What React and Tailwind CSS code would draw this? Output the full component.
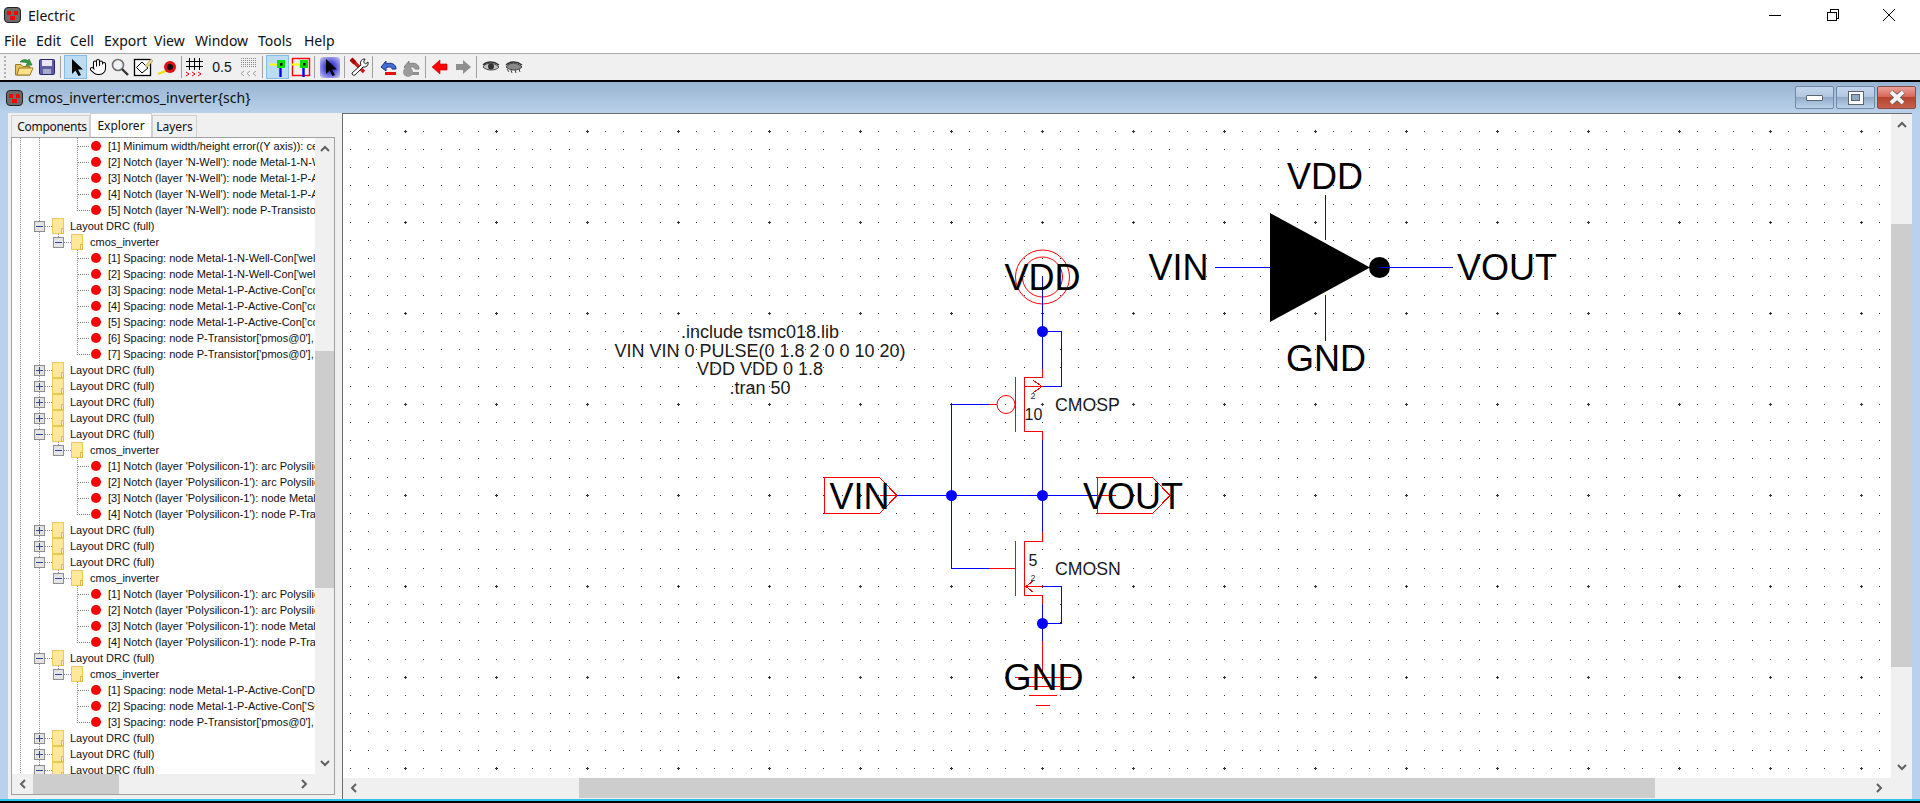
import React from 'react';
import { Hand } from 'lucide-react';

const GUIDE = '#8a8a8a';

const notch = [
  "[1] Minimum width/height error((Y axis)): cell",
  "[2] Notch (layer 'N-Well'): node Metal-1-N-Well",
  "[3] Notch (layer 'N-Well'): node Metal-1-P-Active",
  "[4] Notch (layer 'N-Well'): node Metal-1-P-Active",
  "[5] Notch (layer 'N-Well'): node P-Transistor['pmos",
];
const spacing = [
  "[1] Spacing: node Metal-1-N-Well-Con['well",
  "[2] Spacing: node Metal-1-N-Well-Con['well",
  "[3] Spacing: node Metal-1-P-Active-Con['contact",
  "[4] Spacing: node Metal-1-P-Active-Con['contact",
  "[5] Spacing: node Metal-1-P-Active-Con['contact",
  "[6] Spacing: node P-Transistor['pmos@0'],",
  "[7] Spacing: node P-Transistor['pmos@0'],",
];
const poly = [
  "[1] Notch (layer 'Polysilicon-1'): arc Polysilicon",
  "[2] Notch (layer 'Polysilicon-1'): arc Polysilicon",
  "[3] Notch (layer 'Polysilicon-1'): node Metal-1",
  "[4] Notch (layer 'Polysilicon-1'): node P-Transistor",
];
const last = [
  "[1] Spacing: node Metal-1-P-Active-Con['DRAIN",
  "[2] Spacing: node Metal-1-P-Active-Con['SOURCE",
  "[3] Spacing: node P-Transistor['pmos@0'],",
];

const leaves = (list) => list.map((text, i) => ({ kind: 'leaf', text, end: i === list.length - 1 }));
const closed = () => ({ kind: 'top', open: false });
const opened = () => ({ kind: 'top', open: true });
const cell = { kind: 'cell' };

const rows = [
  ...leaves(notch),
  opened(), cell, ...leaves(spacing),
  closed(), closed(), closed(), closed(),
  opened(), cell, ...leaves(poly),
  closed(), closed(),
  opened(), cell, ...leaves(poly),
  opened(), cell, ...leaves(last),
  closed(), closed(),
  opened(),
];

const Dotted = ({ d }) => (
  <path d={d} stroke={GUIDE} strokeWidth="1" strokeDasharray="1 1" fill="none" shapeRendering="crispEdges" />
);

const Expander = ({ x, open }) => (
  <g shapeRendering="crispEdges">
    <rect x={x + 0.5} y="3.5" width="10" height="10" fill="#e4e4e4" stroke="#8e8e8e" />
    <path d={`M${x + 2} 8.5H${x + 9}`} stroke="#33479a" />
    {!open && <path d={`M${x + 5.5} 5V12`} stroke="#33479a" />}
  </g>
);

const Folder = ({ x }) => (
  <g shapeRendering="crispEdges">
    <path d={`M${x + 0.5} 0.5H${x + 11.5}V15.5H${x + 0.5}Z`} fill="#ffe89c" stroke="#ecca58" />
    <rect x={x + 9.5} y="10.5" width="2" height="5" fill="#fff3c4" stroke="#e3bd45" />
  </g>
);

// gutter drawings use page x coordinates, the tree itself starts at x=12
const TreeRow = ({ row }) => {
  if (row.kind === 'leaf') {
    return (
      <div className="flex h-4 items-center">
        <svg width="96" height="16" viewBox="12 0 96 16" className="shrink-0">
          <Dotted d="M20.5 0V16M39.5 0V16" />
          <Dotted d={row.end ? 'M77.5 0V8.5H90' : 'M77.5 0V16M77.5 8.5H90'} />
          <circle cx="96" cy="8" r="5" fill="#ff0000" />
        </svg>
        <span>{row.text}</span>
      </div>
    );
  }
  if (row.kind === 'cell') {
    return (
      <div className="flex h-4 items-center">
        <svg width="78" height="16" viewBox="12 0 78 16" className="shrink-0">
          <Dotted d="M20.5 0V16M39.5 0V16M58.5 0V4M64 8.5H71" />
          <Expander x={53} open />
          <Folder x={71} />
        </svg>
        <span>cmos_inverter</span>
      </div>
    );
  }
  return (
    <div className="flex h-4 items-center">
      <svg width="58" height="16" viewBox="12 0 58 16" className="shrink-0">
        <Dotted d="M20.5 0V16M39.5 0V4M39.5 14V16M45 8.5H52" />
        <Expander x={34} open={row.open} />
        <Folder x={52} />
      </svg>
      <span>Layout DRC (full)</span>
    </div>
  );
};

const Chevron = ({ dir }) => {
  const paths = {
    up: 'M1 7L5 3L9 7',
    down: 'M1 3L5 7L9 3',
    left: 'M7 1L3 5L7 9',
    right: 'M3 1L7 5L3 9',
  };
  return (
    <svg width="10" height="10" viewBox="0 0 10 10" className="shrink-0">
      <path d={paths[dir]} fill="none" stroke="#606060" strokeWidth="2" />
    </svg>
  );
};

const Logo = () => (
  <svg width="17" height="16" viewBox="0 0 17 16" className="shrink-0">
    <rect x="0.5" y="0.5" width="16" height="15" rx="3.5" fill="#6b6b6b" stroke="#222" />
    <g fill="#ff0000" shapeRendering="crispEdges">
      <rect x="3" y="4" width="4" height="4" />
      <rect x="10" y="4" width="4" height="4" />
      <rect x="6" y="9" width="5" height="4" />
    </g>
  </svg>
);

const Sep = ({ className }) => <div className={`h-[22px] w-px bg-[#a0a0a0] ${className}`} />;

const Tool = ({ w = 'w-[23px]', active, children }) => (
  <div
    className={`${w} flex h-[24px] shrink-0 items-center justify-center ${
      active ? 'border border-[#86bde8] bg-[#bcdcf4]' : ''
    }`}
  >
    {children}
  </div>
);

const Icon = ({ children, w = 20, h = 20 }) => (
  <svg width={w} height={h} viewBox={`0 0 ${w} ${h}`}>
    {children}
  </svg>
);

const Pointer = () => <path d="M6 2V17L9.5 13.5L12.5 19L15 18L12 12.5H17Z" fill="#000" />;

const ArcToggle = ({ box }) => (
  <Icon>
    {box && <rect x="1.5" y="1.5" width="17" height="17" fill="none" stroke="#ff0000" strokeWidth="1.4" />}
    <path d="M1 7.5H11" stroke="#ffff00" strokeWidth="2" />
    <path d="M12.5 10V20" stroke="#0000ff" strokeWidth="2.4" />
    <rect x="9" y="3" width="8" height="8" fill="#00e000" />
    <rect x="12" y="6" width="2.5" height="2.5" fill="#000" />
  </Icon>
);

const GridIcon = () => (
  <Icon w={20} h={22}>
    <path d="M4.5 2V14M9.5 2V14M14.5 2V14M1 5.5H18M1 10.5H18" stroke="#000" strokeWidth="1.2" fill="none" shapeRendering="crispEdges" />
    <path d="M1 16L4 18L1 20M7 16L10 18L7 20M13 16L16 18L13 20" stroke="#ff0000" fill="none" />
  </Icon>
);

const GridOff = () => (
  <Icon w={20} h={22}>
    <path d="M2 2H18M2 4H18M2 6H18M2 8H18M2 10H18" stroke="#8a8a8a" strokeDasharray="1.2 0.8" shapeRendering="crispEdges" />
    <path d="M5 15L2 17.5L5 20M11 15L8 17.5L11 20M17 15L14 17.5L17 20" stroke="#a0a0a0" fill="none" />
  </Icon>
);

const Undo = ({ gray }) => (
  <Icon>
    <path
      d="M3 10L8 4V7C13 5 18 7 18 12H14C14 10 11 9 8 11V14Z"
      fill={gray ? '#9a9a9a' : '#3f6fd8'}
      stroke={gray ? '#7e7e7e' : '#1c2f8c'}
    />
    <rect x="7" y="15" width="11" height="3" fill={gray ? '#8f8f8f' : '#e01010'} />
    {gray && <circle cx="7" cy="15" r="5" fill="#9a9a9a" />}
  </Icon>
);

const Eye = ({ shut }) => (
  <Icon w={18} h={14}>
    <path d="M1 7C4 2 12 2 17 7C14 11 5 11 1 7Z" fill={shut ? '#8a8a8a' : '#c4c4c4'} stroke="#444" />
    {shut ? (
      <path d="M2 9L4 12M6 10L7 13M10 10L11 13M14 9L15 12" stroke="#444" />
    ) : (
      <circle cx="9" cy="6.5" r="3" fill="#333" />
    )}
    <path d="M1 5C5 1 12 1 17 5" stroke="#333" strokeWidth="1.4" fill="none" />
  </Icon>
);

const Toolbar = () => (
  <div className="flex h-[26px] shrink-0 items-center bg-[#f0f0f0]">
    <div className="ml-[4px] mr-[5px] h-[22px] w-[3px] border-l-2 border-dotted border-[#b0b0b0]" />
    <Tool>
      <Icon>
        <path d="M1.5 7.5H7L9 9.5H16V18H1.5Z" fill="#e6c25a" stroke="#9c7b22" />
        <path d="M3 18L5 11H19L16 18Z" fill="#fbe08a" stroke="#9c7b22" />
        <path d="M6 5C9 2 12 2 14 4L15 2L18 8L12 8.5L13.5 6C11 5 9 5 6 5Z" fill="#2f9e3a" stroke="#1c6a24" strokeWidth="0.6" />
      </Icon>
    </Tool>
    <Tool>
      <Icon>
        <rect x="2.5" y="2.5" width="15" height="15" rx="1" fill="#5d5da8" stroke="#27276e" />
        <rect x="5" y="3" width="10" height="6" fill="#e8e8f4" />
        <rect x="6" y="12" width="8" height="5" fill="#aaaacc" />
      </Icon>
    </Tool>
    <Sep className="ml-[2px] mr-[3px]" />
    <Tool active>
      <Icon>
        <Pointer />
      </Icon>
    </Tool>
    <Tool w="w-[22px]">
      <Hand size={18} strokeWidth={1.4} color="#000" fill="#fff" />
    </Tool>
    <Tool w="w-[22px]">
      <Icon>
        <circle cx="8" cy="8" r="5.5" fill="#eef2f6" stroke="#6e6e6e" strokeWidth="1.6" />
        <path d="M12 12L18 18" stroke="#333" strokeWidth="2.4" />
      </Icon>
    </Tool>
    <Tool w="w-[24px]">
      <Icon>
        <rect x="1.5" y="2.5" width="16" height="16" fill="#fff" stroke="#000" strokeWidth="1.3" />
        <path d="M9 5L15 11L9 16L3.5 10.5Z" fill="#fff" stroke="#000" />
        <path d="M12 9L18 2L20 4L14 10.5Z" fill="#f0d488" stroke="#a08a50" strokeWidth="0.6" />
      </Icon>
    </Tool>
    <Tool w="w-[24px]">
      <Icon>
        <path d="M1 17L11 13" stroke="#f4e000" strokeWidth="2.4" />
        <circle cx="13" cy="10" r="6" fill="#e01010" />
        <circle cx="13" cy="10" r="3" fill="#111" />
      </Icon>
    </Tool>
    <Sep className="ml-[2px] mr-[2px]" />
    <Tool w="w-[22px]">
      <GridIcon />
    </Tool>
    <div className="flex w-[32px] shrink-0 justify-center font-['Liberation_Sans'] text-[14px] text-[#101018]">0.5</div>
    <Tool w="w-[22px]">
      <GridOff />
    </Tool>
    <Sep className="ml-[2px] mr-[3px]" />
    <Tool active>
      <ArcToggle />
    </Tool>
    <Tool>
      <ArcToggle box />
    </Tool>
    <Sep className="ml-[2px] mr-[3px]" />
    <Tool>
      <div className="flex h-[21px] w-[20px] items-center justify-center rounded-[3px] bg-[radial-gradient(circle,#3d3dd8_30%,#c8c8f0_95%)]">
        <Icon>
          <Pointer />
        </Icon>
      </div>
    </Tool>
    <Sep className="ml-[3px] mr-[2px]" />
    <Tool>
      <Icon>
        <path d="M3 3L15 15" stroke="#d01818" strokeWidth="3.4" />
        <path d="M16 2A4 4 0 0 0 12 8L3 16A2 2 0 0 0 6 18L14 10A4 4 0 0 0 19 5L16.5 7L14.5 5Z" fill="#fff" stroke="#222" />
        <path d="M2 2L6 6" stroke="#a00" strokeWidth="4" />
      </Icon>
    </Tool>
    <Sep className="ml-[2px] mr-[3px]" />
    <Tool>
      <Undo />
    </Tool>
    <Tool>
      <Undo gray />
    </Tool>
    <Sep className="ml-[3px] mr-[2px]" />
    <Tool>
      <Icon>
        <path d="M2 10L10 3V7H17V13H10V17Z" fill="#ff0000" stroke="#c00000" strokeWidth="0.6" />
      </Icon>
    </Tool>
    <Tool>
      <Icon>
        <path d="M18 10L10 3V7H3V13H10V17Z" fill="#8f8f8f" />
      </Icon>
    </Tool>
    <Sep className="ml-[2px] mr-[2px]" />
    <Tool>
      <Eye />
    </Tool>
    <Tool>
      <Eye shut />
    </Tool>
  </div>
);

const gridPath = () => {
  let d = '';
  for (let i = -29; i < 58; i++) {
    for (let j = -11; j < 26; j++) {
      const x = Math.floor(860.3 + i * 18.2);
      const y = Math.floor(313.3 + j * 18.2);
      d += `M${x} ${y}h1v1h-1z`;
      if (i % 5 === 0 && j % 5 === 0) {
        d += `M${x - 1} ${y}h3v1h-3zM${x} ${y - 1}h1v3h-1z`;
      }
    }
  }
  return d;
};

const Label = ({ x, y, size = 36, anchor = 'middle', fill = '#000', children }) => (
  <text x={x} y={y} fontSize={size} textAnchor={anchor} fill={fill} className="font-['Liberation_Sans']">
    {children}
  </text>
);

// viewBox is in page pixels, so coordinates read straight off the screenshot
const Schematic = () => (
  <svg width="1548" height="664" viewBox="343 114 1548 664" className="block bg-white">
    <path d={gridPath()} fill="#333" shapeRendering="crispEdges" />

    <g fontSize="18" textAnchor="middle" fill="#1a1a1a" className="font-['Liberation_Sans']">
      <text x="760" y="338">.include tsmc018.lib</text>
      <text x="760" y="356.5">VIN VIN 0 PULSE(0 1.8 2 0 0 10 20)</text>
      <text x="760" y="375">VDD VDD 0 1.8</text>
      <text x="760" y="393.5">.tran 50</text>
    </g>

    <g fill="none" stroke="#ff0000" strokeWidth="1">
      <circle cx="1042.5" cy="277" r="27" />
      <circle cx="1042.5" cy="277" r="20" />
      <circle cx="1006" cy="404.5" r="9" />
    </g>
    <g fill="none" stroke="#ff0000" strokeWidth="1" shapeRendering="crispEdges">
      <path d="M1042.5 368.5V377.5H1024.5V431.5H1042.5V440" />
      <path d="M1015.5 377V432M989 404.5H997" />
      <path d="M1024.5 386.5H1042.5M1033.5 380.5L1042 386.5L1033.5 392.5" />
      <path d="M1042.5 532V541.5H1024.5V595.5H1042.5V604" />
      <path d="M1015.5 541V596M989 568.5H1015" />
      <path d="M1024.5 586.5H1042.5M1033.5 580.5L1026 586.5L1033.5 592.5" />
      <path d="M1042.5 641V677.5M1015 677.5H1071M1025 686.5H1060M1029 695.5H1057M1036 705.5H1050" />
      <path d="M824.5 477.5H879.5L897 495.5L879.5 513.5H824.5ZM880 495.5H897" />
      <path d="M1097.5 477.5H1152.5L1170 495.5L1152.5 513.5H1097.5ZM1097 495.5H1115" />
    </g>
    <g fill="none" stroke="#0000ff" strokeWidth="1" shapeRendering="crispEdges">
      <path d="M1042.5 277V368.5M1042.5 331.5H1061.5V386.5H1042.5" />
      <path d="M989 404.5H951.5V568.5H989" />
      <path d="M897 495.5H1097M1042.5 440V532M1042.5 604V641" />
      <path d="M1042.5 586.5H1061.5V623.5H1042.5" />
      <path d="M1215 267.5H1270M1379 267.5H1453M1325.5 195V240M1325.5 295V341" />
    </g>
    <g fill="#0000ff">
      <circle cx="1042.5" cy="331.5" r="5.5" />
      <circle cx="951.5" cy="495.5" r="5.5" />
      <circle cx="1042.5" cy="495.5" r="5.5" />
      <circle cx="1042.5" cy="623.5" r="5.5" />
    </g>

    <path d="M1270 213L1370 267.5L1270 322Z" fill="#000" />
    <circle cx="1379.5" cy="267.5" r="10.5" fill="#000" />
    <path d="M1379 267.5H1390" stroke="#0000ff" shapeRendering="crispEdges" />

    <Label x={1042.5} y={290}>VDD</Label>
    <Label x={1043.5} y={690}>GND</Label>
    <Label x={859.5} y={509}>VIN</Label>
    <Label x={1133} y={509}>VOUT</Label>
    <Label x={1325} y={189}>VDD</Label>
    <Label x={1326} y={371}>GND</Label>
    <Label x={1178.5} y={280}>VIN</Label>
    <Label x={1507} y={280}>VOUT</Label>

    <Label x={1055} y={411} size={17.7} anchor="start" fill="#1a1a1a">CMOSP</Label>
    <Label x={1055} y={575} size={17.7} anchor="start" fill="#1a1a1a">CMOSN</Label>
    <Label x={1033.5} y={420} size={16} fill="#1a1a1a">10</Label>
    <Label x={1033} y={566} size={16} fill="#1a1a1a">5</Label>
    <Label x={1033} y={399} size={9} fill="#333">2</Label>
    <Label x={1033} y={581} size={9} fill="#333">2</Label>
  </svg>
);

const VScroll = ({ w, top, thumb }) => (
  <div className={`${w} relative flex shrink-0 flex-col items-center justify-between bg-[#f0f0f0] py-[6px]`}>
    <Chevron dir="up" />
    <div className={`absolute inset-x-0 ${top} ${thumb} bg-[#cdcdcd]`} />
    <Chevron dir="down" />
  </div>
);

const HScroll = ({ h, left, thumb, padding }) => (
  <div className={`${h} ${padding} relative flex shrink-0 items-center justify-between bg-[#f0f0f0]`}>
    <Chevron dir="left" />
    <div className={`absolute inset-y-0 ${left} ${thumb} bg-[#cdcdcd]`} />
    <Chevron dir="right" />
  </div>
);

const WinButton = ({ close, children }) => (
  <div
    className={`flex h-[23px] w-[39px] items-center justify-center rounded-[2px] border ${
      close
        ? 'border-[#8c4a44] bg-[linear-gradient(#e9a198_0%,#d9695a_45%,#b8432c_50%,#c4604c_100%)]'
        : 'border-[#7189a8] bg-[linear-gradient(#c3d6ec_0%,#b2c8e2_45%,#92abc8_50%,#bcd2ea_100%)]'
    }`}
  >
    {children}
  </div>
);

const InnerWindow = () => (
  <div className="flex min-h-0 flex-1 flex-col border-t-2 border-black bg-[#b9d1ea]">
    <div className="flex h-[31px] shrink-0 items-center justify-between bg-[linear-gradient(#99b4d1,#b9d1ea)] pl-[6px] pr-[4px]">
      <div className="flex items-center gap-[5px] font-['Noto_Sans'] text-[14px] text-[#101010]">
        <Logo />
        <span>cmos_inverter:cmos_inverter{'{sch}'}</span>
      </div>
      <div className="flex gap-[2px]">
        <WinButton>
          <div className="h-[6px] w-[17px] rounded-[1px] border border-[#5c6470] bg-white" />
        </WinButton>
        <WinButton>
          <div className="flex h-[14px] w-[16px] items-center justify-center border border-[#5c6470] bg-white">
            <div className="h-[7px] w-[9px] border border-[#5c6470] bg-[#8fa9c8]" />
          </div>
        </WinButton>
        <WinButton close>
          <svg width="18" height="15" viewBox="0 0 18 15">
            <path d="M3 2L15 13M15 2L3 13" stroke="#5c5c5c" strokeWidth="5.4" />
            <path d="M3 2L15 13M15 2L3 13" stroke="#f4f4f4" strokeWidth="3.8" />
          </svg>
        </WinButton>
      </div>
    </div>

    <div className="flex min-h-0 flex-1 pl-[8px] pr-[8px]">
      {/* Left panel */}
      <div className="flex w-[334px] shrink-0 flex-col bg-[#f0f0f0] pb-[4px] pl-[3px] pr-[7px]">
        <div className="flex h-[24px] shrink-0 items-end font-['Noto_Sans'] text-[12px] text-[#101010]">
          <div className="flex h-[22px] w-[79px] items-center justify-center border border-b-0 border-[#d0d0d0] pl-[3px] tracking-[-0.3px]">Components</div>
          <div className="flex h-[24px] w-[62px] items-center justify-center border border-b-0 border-[#d0d0d0] bg-white">Explorer</div>
          <div className="flex h-[22px] w-[45px] items-center justify-center border border-b-0 border-[#d0d0d0]">Layers</div>
        </div>
        <div className="flex min-h-0 flex-1 flex-col border border-[#a0a0a0]">
          <div className="flex min-h-0 flex-1">
            <div className="min-w-0 flex-1 overflow-hidden whitespace-nowrap bg-white font-['Liberation_Sans'] text-[11px] text-[#101010]">
              {rows.map((row, i) => (
                <TreeRow key={i} row={row} />
              ))}
            </div>
            <VScroll w="w-[19px]" top="top-[213px]" thumb="h-[237px]" />
          </div>
          <HScroll h="h-[20px]" left="left-[21px]" thumb="w-[86px]" padding="pl-[6px] pr-[25px]" />
        </div>
      </div>

      {/* Canvas */}
      <div className="flex min-w-0 flex-1 flex-col border-l border-t border-[#6d6d6d] bg-[#f0f0f0] pb-[1px]">
        <div className="flex min-h-0 flex-1">
          <Schematic />
          <VScroll w="w-[21px]" top="top-[110px]" thumb="h-[443px]" />
        </div>
        <HScroll h="h-[20px]" left="left-[236px]" thumb="w-[1076px]" padding="pl-[6px] pr-[28px]" />
      </div>
    </div>

    <div className="h-[2px] shrink-0 bg-[#2bc4e8]" />
    <div className="h-[2px] shrink-0 bg-black" />
  </div>
);

export default function App() {
  const menus = [
    ['File', 'w-[32px]'],
    ['Edit', 'w-[34px]'],
    ['Cell', 'w-[34px]'],
    ['Export', 'w-[50px]'],
    ['View', 'w-[41px]'],
    ['Window', 'w-[63px]'],
    ['Tools', 'w-[46px]'],
    ['Help', 'w-[40px]'],
  ];

  return (
    <div className="flex h-[803px] w-[1920px] flex-col overflow-hidden bg-white">
      {/* Title bar */}
      <div className="flex h-[30px] shrink-0 items-center pl-[4px] font-['Noto_Sans'] text-[14px] text-[#101010]">
        <Logo />
        <span className="ml-[7px]">Electric</span>
        <div className="ml-auto flex items-center">
          <div className="flex w-[58px] justify-center">
            <div className="h-px w-[12px] bg-black" />
          </div>
          <div className="flex w-[58px] justify-center">
            <svg width="12" height="12" viewBox="0 0 12 12">
              <path d="M3 2.5V.5H11.5V9H9.5M.5 3H9V11.5H.5Z" fill="none" stroke="#000" shapeRendering="crispEdges" />
            </svg>
          </div>
          <div className="flex w-[58px] justify-center pr-[4px]">
            <svg width="12" height="12" viewBox="0 0 12 12">
              <path d="M0 0L12 12M12 0L0 12" stroke="#000" />
            </svg>
          </div>
        </div>
      </div>

      {/* Menu bar */}
      <div className="flex h-[24px] shrink-0 items-start border-b border-[#a8a8a8] pl-[4px] font-['Noto_Sans'] text-[14px] text-[#101010]">
        {menus.map(([label, w]) => (
          <div key={label} className={w}>
            {label}
          </div>
        ))}
      </div>

      <Toolbar />
      <InnerWindow />
    </div>
  );
}
